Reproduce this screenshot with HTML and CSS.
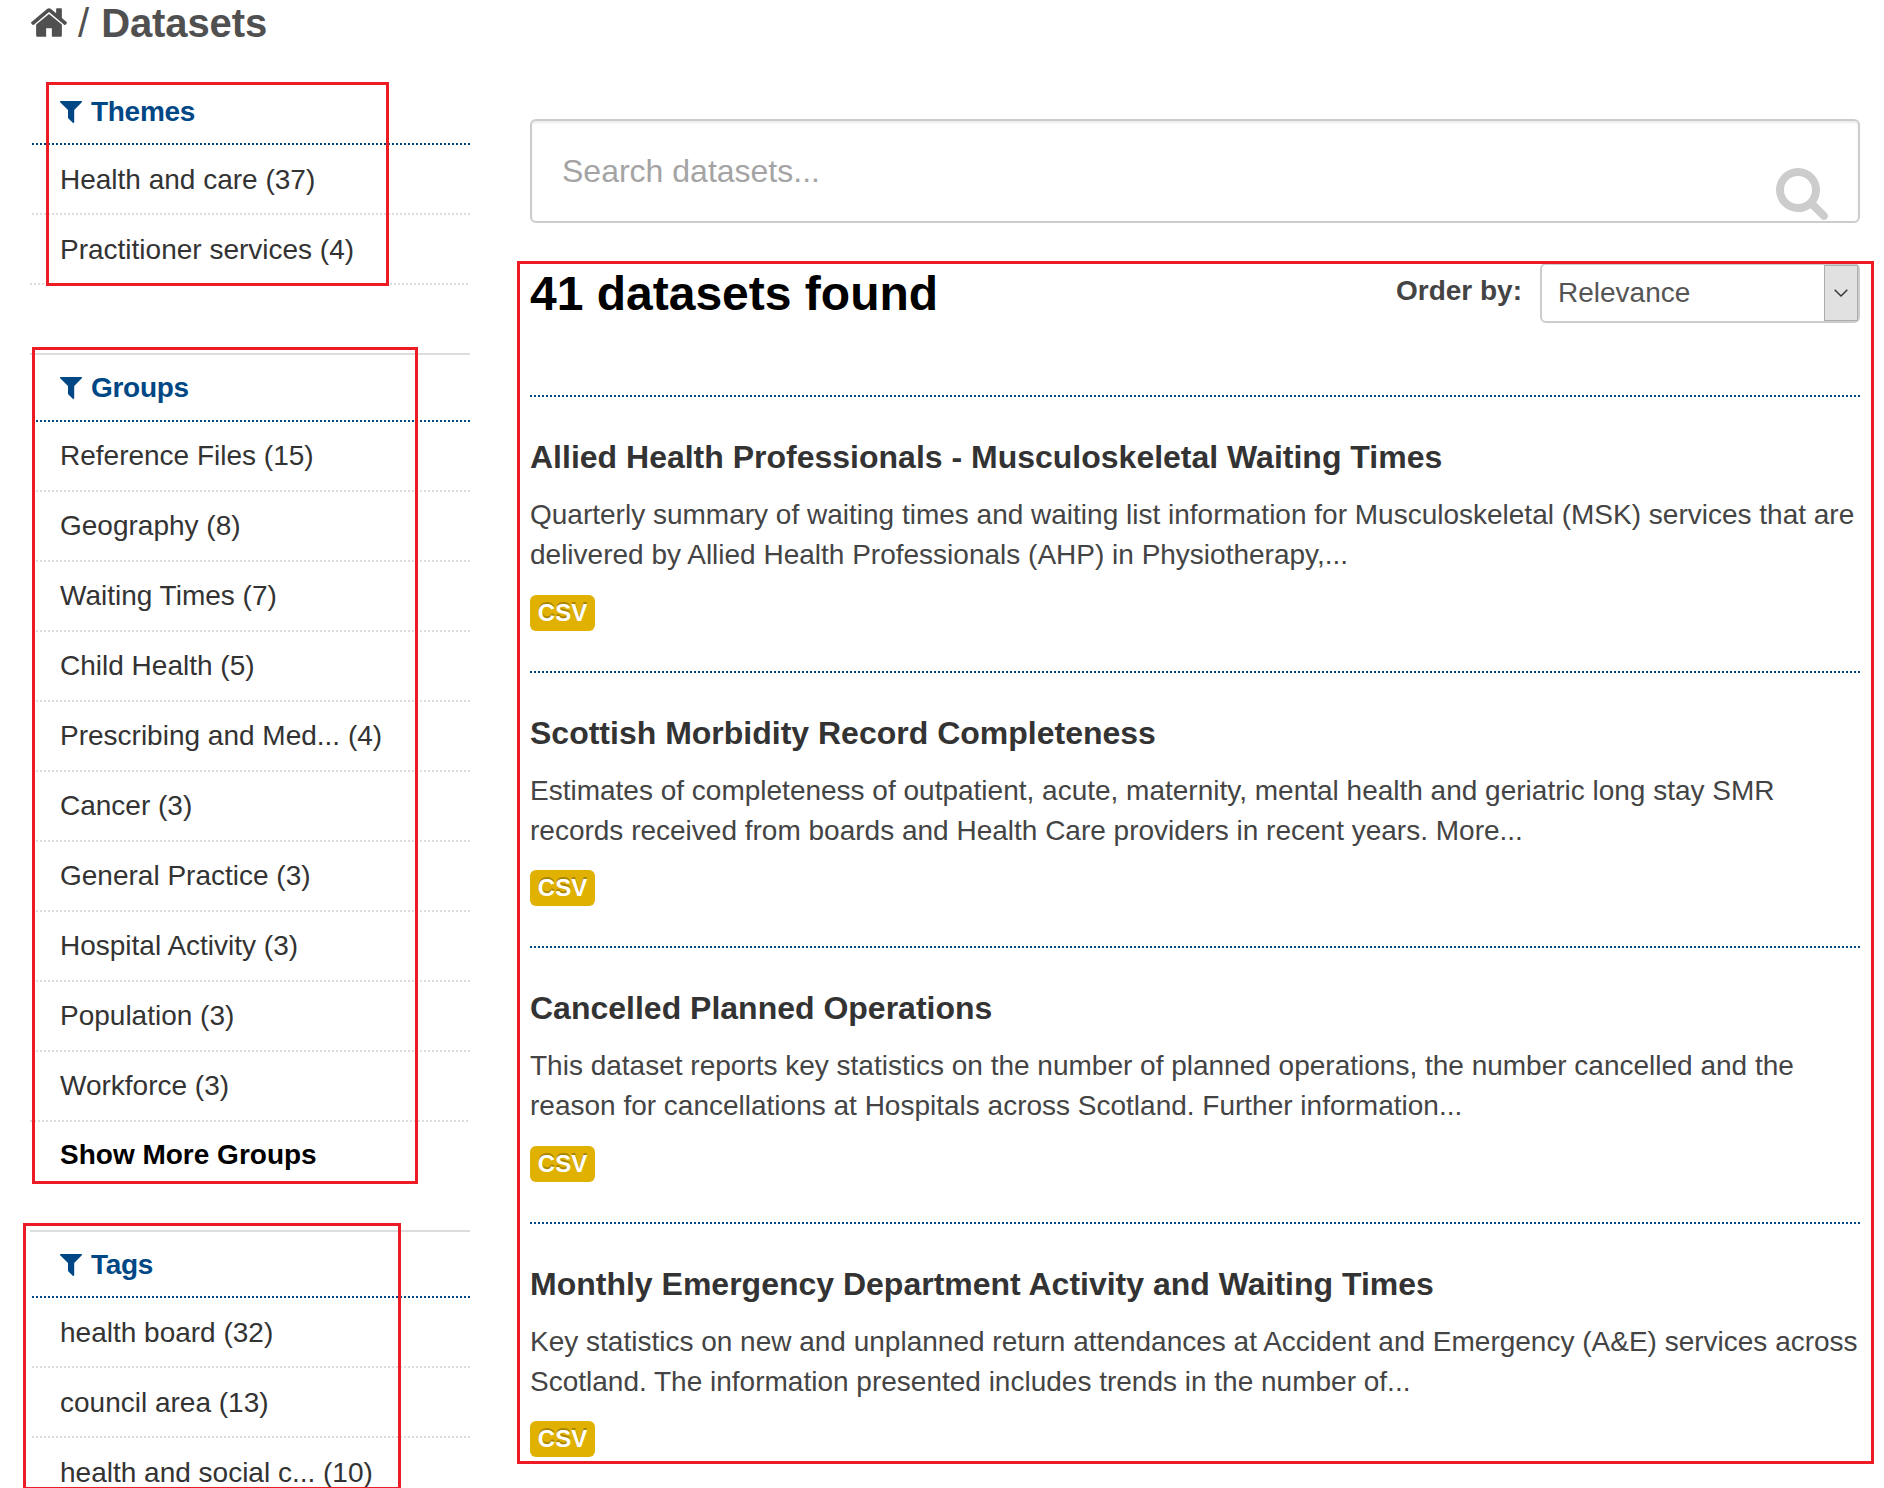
FILE: index.html
```html
<!DOCTYPE html>
<html lang="en">
<head>
<meta charset="utf-8">
<title>Datasets</title>
<link rel="stylesheet" href="styles.css">
</head>
<body>
<svg class="sprite" aria-hidden="true">
  <symbol id="filter" viewBox="0 0 22 22"><path d="M0.6 0H21.4Q22.4 0.4 21.8 1.3L14.2 9V21.2Q13.8 22.3 12.8 21.7L8.4 17.6Q8 17.2 8 16.6V9L0.2 1.3Q-0.4 0.4 0.6 0Z"/></symbol>
</svg>
<div class="page">
  <nav class="breadcrumb">
    <svg class="home" viewBox="26 253 1612 1283"><path d="M1408 992v480q0 26-19 45t-45 19H960v-384H704v384H320q-26 0-45-19t-19-45V992q0-1 .5-3t.5-3l575-474 575 474q1 2 1 6zm223-69l-62 74q-8 9-21 11h-3q-13 0-21-7L832 424 140 1001q-12 8-24 7-13-2-21-11l-62-74q-8-10-7-23.5T37 878l719-599q32-26 76-26t76 26l244 204V288q0-14 9-23t23-9h192q14 0 23 9t9 23v408l219 182q10 8 11 21.5t-7 23.5z"/></svg>
    <span class="slash">/</span>
    <strong>Datasets</strong>
  </nav>
  <div class="columns">
    <aside class="sidebar">
      <section class="facet">
        <h2><svg class="funnel"><use href="#filter"/></svg>Themes</h2>
        <ul>
          <li>Health and care (37)</li>
          <li>Practitioner services (4)</li>
        </ul>
      </section>
      <section class="facet ruled groups">
        <h2><svg class="funnel"><use href="#filter"/></svg>Groups</h2>
        <ul>
          <li>Reference Files (15)</li>
          <li>Geography (8)</li>
          <li>Waiting Times (7)</li>
          <li>Child Health (5)</li>
          <li>Prescribing and Med... (4)</li>
          <li>Cancer (3)</li>
          <li>General Practice (3)</li>
          <li>Hospital Activity (3)</li>
          <li>Population (3)</li>
          <li>Workforce (3)</li>
        </ul>
        <p class="more">Show More Groups</p>
      </section>
      <section class="facet ruled">
        <h2><svg class="funnel"><use href="#filter"/></svg>Tags</h2>
        <ul>
          <li>health board (32)</li>
          <li>council area (13)</li>
          <li>health and social c... (10)</li>
        </ul>
      </section>
    </aside>
    <main class="main">
      <div class="search">
        <span>Search datasets...</span>
        <svg class="glass" viewBox="0 128 1664 1664"><path d="M1152 832q0-185-131.5-316.5T704 384 387.5 515.5 256 832t131.5 316.5T704 1280t316.5-131.5T1152 832zm512 832q0 52-38 90t-90 38q-54 0-90-38l-343-342q-179 124-399 124-143 0-273.5-55.5T205.5 1330 55.5 1105.5 0 832t55.5-273.5T205.5 334t225-150T704 128t273.5 55.5 224.5 150 150 225T1408 832q0 220-124 399l343 343q37 37 37 90z"/></svg>
      </div>
      <div class="summary">
        <h1>41 datasets found</h1>
        <div class="order">
          <span class="order-label">Order by:</span>
          <div class="select">
            <span>Relevance</span>
            <span class="arrow"><svg class="chevron" viewBox="0 0 14 8"><path d="M.7 .7L7 7L13.3 .7"/></svg></span>
          </div>
        </div>
      </div>
      <article class="dataset">
        <h3>Allied Health Professionals - Musculoskeletal Waiting Times</h3>
        <p>Quarterly summary of waiting times and waiting list information for Musculoskeletal (MSK) services that are<br>delivered by Allied Health Professionals (AHP) in Physiotherapy,...</p>
        <span class="format">CSV</span>
      </article>
      <article class="dataset">
        <h3>Scottish Morbidity Record Completeness</h3>
        <p>Estimates of completeness of outpatient, acute, maternity, mental health and geriatric long stay SMR<br>records received from boards and Health Care providers in recent years. More...</p>
        <span class="format">CSV</span>
      </article>
      <article class="dataset">
        <h3>Cancelled Planned Operations</h3>
        <p>This dataset reports key statistics on the number of planned operations, the number cancelled and the<br>reason for cancellations at Hospitals across Scotland. Further information...</p>
        <span class="format">CSV</span>
      </article>
      <article class="dataset">
        <h3>Monthly Emergency Department Activity and Waiting Times</h3>
        <p>Key statistics on new and unplanned return attendances at Accident and Emergency (A&amp;E) services across<br>Scotland. The information presented includes trends in the number of...</p>
        <span class="format">CSV</span>
      </article>
    </main>
  </div>
  <div class="mark mark-themes"></div>
  <div class="mark mark-groups"></div>
  <div class="mark mark-tags"></div>
  <div class="mark mark-results"></div>
</div>
</body>
</html>
```
FILE: styles.css
```css
* { box-sizing: border-box; }

body {
  margin: 0;
  background: #fff;
  color: #444;
  font: 28px/40px "Liberation Sans", Arial, sans-serif;
}

h1, h2, h3, p, ul { margin: 0; padding: 0; }
ul { list-style: none; }
.sprite { display: none; }

.page {
  position: relative;
  width: 1884px;
  height: 1488px;
  overflow: hidden;
}

/* Breadcrumb */
.breadcrumb {
  display: flex;
  height: 79px;
  padding: 0 0 0 31px;
  font-size: 40px;
  line-height: 46px;
  color: #505050;
}
.home {
  width: 36px;
  height: 29px;
  margin: 8px 11px 0 0;
  fill: #505050;
}
.slash { margin-right: 12px; }
.breadcrumb strong { letter-spacing: -.1px; }

.columns {
  display: flex;
  gap: 60px;
  padding-left: 30px;
}

/* Facets */
.sidebar { width: 440px; }
.facet { margin-bottom: 68px; }
.ruled { border-top: 2px solid #ddd; }
.facet h2, .facet li {
  height: 70px;
  padding: 15px 30px 0;
  background: repeating-linear-gradient(90deg, #ddd 0 2px, transparent 2px 4px) 2px 100% / 438px 2px no-repeat;
}
.facet h2 {
  display: flex;
  height: 66px;
  font-size: 28px;
  line-height: 36px;
  letter-spacing: -.3px;
  color: #004785;
  background-image: repeating-linear-gradient(90deg, #004785 0 2px, transparent 2px 4px);
}
.groups h2 { height: 67px; }
.facet li { color: #333; }
.groups li { padding-top: 14px; }
.facet li:last-child { background-position: 0 100%; }
.funnel {
  width: 22px;
  height: 22px;
  margin: 7px 9px 0 0;
  fill: #004785;
}
.more {
  height: 40px;
  padding: 15px 30px 0;
  line-height: 36px;
  font-weight: bold;
  color: #000;
}

/* Search */
.main { width: 1330px; padding-top: 40px; }
.search {
  display: flex;
  justify-content: space-between;
  height: 104px;
  padding: 32px 30px 0;
  border: 2px solid #ccc;
  border-radius: 6px;
  box-shadow: inset 0 2px 2px rgba(0, 0, 0, .075);
  font-size: 32px;
  line-height: 36px;
  color: #a4a4a4;
}
.glass {
  width: 52px;
  height: 52px;
  margin-top: 15px;
  fill: #ccc;
}

/* Result summary */
.summary {
  display: flex;
  justify-content: space-between;
  height: 132.4px;
  margin-top: 40px;
}
h1 {
  padding-top: 1px;
  font-size: 48px;
  line-height: 60px;
  color: #000;
}
.order { display: flex; gap: 18px; }
.order-label { padding-top: 8px; font-weight: bold; }
.select {
  display: flex;
  justify-content: space-between;
  width: 320px;
  height: 60px;
  padding-left: 16px;
  border: 2px solid #ccc;
  border-radius: 6px;
  line-height: 56px;
  color: #555;
}
.arrow {
  display: flex;
  align-items: center;
  justify-content: center;
  width: 34px;
  background: #e1e1e1;
  border: 1px solid #adadad;
}
.chevron {
  width: 14px;
  height: 8px;
  fill: none;
  stroke: #333;
  stroke-width: 1.4;
}

/* Dataset list */
.dataset {
  height: 275.4px;
  padding-top: 42px;
  background: repeating-linear-gradient(90deg, #004785 0 2px, transparent 2px 4px) 0 0 / 100% 2px no-repeat;
}
.dataset h3 {
  font-size: 32px;
  line-height: 41.6px;
  color: #333;
}
.dataset p {
  margin: 16.4px 0 19.6px;
  white-space: nowrap;
}
.format {
  display: block;
  width: 65px;
  height: 36px;
  border-radius: 6px;
  background: #e0b100;
  color: #fff;
  font-size: 24px;
  font-weight: bold;
  line-height: 36px;
  text-align: center;
  text-shadow: 0 -2px 0 rgba(0, 0, 0, .25);
}

/* Red annotation frames over the page */
.mark { position: absolute; border: 3px solid #ed1c24; }
.mark-themes { left: 46px; top: 82px; width: 343px; height: 204px; }
.mark-groups { left: 32px; top: 347px; width: 386px; height: 837px; }
.mark-tags { left: 23px; top: 1223px; width: 378px; height: 267px; }
.mark-results { left: 517px; top: 261px; width: 1357px; height: 1203px; }
```
